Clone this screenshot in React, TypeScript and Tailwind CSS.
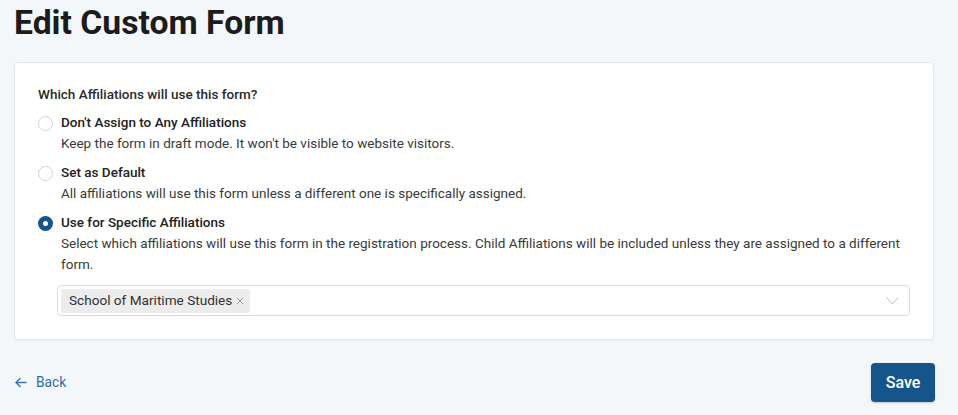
import React from "react";

function Radio({ checked }: { checked?: boolean }) {
  if (checked) {
    return (
      <span className="mt-[4px] flex h-[15px] w-[15px] shrink-0 items-center justify-center rounded-full bg-[#15558b]">
        <span className="h-[5px] w-[5px] rounded-full bg-white" />
      </span>
    );
  }
  return <span className="mt-[4px] h-[15px] w-[15px] shrink-0 rounded-full border border-[#d2d2d2] bg-white" />;
}

function Option({
  checked,
  label,
  desc,
}: {
  checked?: boolean;
  label: string;
  desc: string;
}) {
  return (
    <div className="flex gap-[8px]">
      <Radio checked={checked} />
      <div className="flex flex-col">
        <div className="text-[13.5px] leading-[21px] font-medium text-[#222]">{label}</div>
        <div className="text-[13.5px] leading-[21px] text-[#3a3a3a]">{desc}</div>
      </div>
    </div>
  );
}

export default function App() {
  return (
    <div
      className="min-h-[415px] w-full bg-[#f4f7fa] pl-[14px] pr-[24px] pt-[4px]"
      style={{ fontFamily: "Roboto, 'Liberation Sans', sans-serif" }}
    >
      <h1 className="text-[33.7px] leading-[38px] font-bold text-[#1c1c1c]">Edit Custom Form</h1>
      <div className="mt-[20px] rounded-[4px] border border-[#e4e8ed] bg-white px-[23px] pb-[23px] pt-[21px] shadow-[0_1px_2px_rgba(0,0,0,0.04)]">
        <div className="text-[13.5px] leading-[21px] font-medium text-[#2a2a2a]">
          Which Affiliations will use this form?
        </div>
        <div className="mt-[7px] flex flex-col gap-[8px]">
          <Option
            label="Don't Assign to Any Affiliations"
            desc="Keep the form in draft mode. It won't be visible to website visitors."
          />
          <Option
            label="Set as Default"
            desc="All affiliations will use this form unless a different one is specifically assigned."
          />
          <Option
            checked
            label="Use for Specific Affiliations"
            desc="Select which affiliations will use this form in the registration process. Child Affiliations will be included unless they are assigned to a different form."
          />
        </div>
        <div className="ml-[19px] mt-[10px] flex h-[31px] items-center justify-between rounded-[4px] border border-[#dadada] bg-white pl-[3px] pr-[10px]">
          <span className="flex h-[24px] items-center gap-[4px] rounded-[3px] bg-[#ececec] pl-[8px] pr-[6px] text-[13.6px] text-[#333]">
            School of Maritime Studies
            <svg width="8" height="8" viewBox="0 0 8 8" className="mt-[1px]">
              <path d="M1 1 L7 7 M7 1 L1 7" stroke="#9a9a9a" strokeWidth="1" />
            </svg>
          </span>
          <svg width="13" height="8" viewBox="0 0 13 8">
            <path d="M0.5 0.5 L6.5 7 L12.5 0.5" fill="none" stroke="#bdbdbd" strokeWidth="1" />
          </svg>
        </div>
      </div>
      <div className="mt-[23px] flex items-center justify-between">
        <a className="ml-[1px] flex items-center gap-[9px] text-[13.8px] text-[#2f6ca3]">
          <svg width="12" height="11" viewBox="0 0 12 11">
            <path d="M11.5 5.5 H1 M5.5 1 L1 5.5 L5.5 10" fill="none" stroke="#3b76ab" strokeWidth="1.4" />
          </svg>
          Back
        </a>
        <button className="-mr-[1px] h-[39px] w-[64px] rounded-[4px] bg-[#15558b] text-[16px] font-medium text-white shadow-[0_1px_2px_rgba(0,0,0,0.2)]">
          Save
        </button>
      </div>
    </div>
  );
}
